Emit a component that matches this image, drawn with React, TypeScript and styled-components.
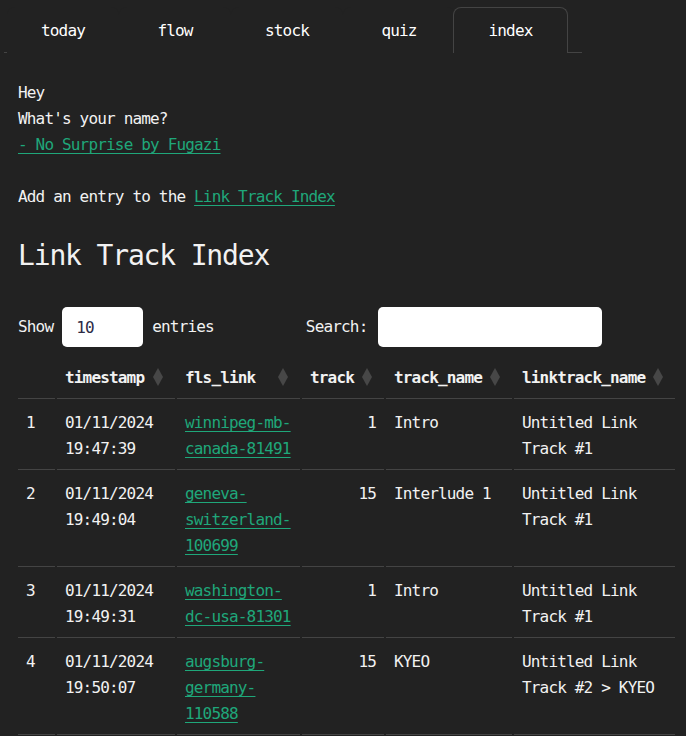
import React from 'react';
import styled, {createGlobalStyle} from 'styled-components';

const mono = `'DejaVu Sans Mono', 'Liberation Mono', monospace`;

const GlobalStyle = createGlobalStyle`
    html, body {
        margin: 0;
        background: #222;
        color: #f2f2f2;
        font-family: ${mono};
        font-size: 16px;
        letter-spacing: -0.83px;
        line-height: 26px;
    }
`;

const Nav = styled.ul`
    display: flex;
    list-style: none;
    margin: 0 0 0 4px;
    padding: 7px 0 0 3px;
    width: 575px;
    border-bottom: 1px solid #444;
`;

interface ITabProps {
    readonly active?: boolean;
};

const Tab = styled.li<ITabProps>`
    width: 112px;
    height: 46px;
    box-sizing: border-box;
    display: flex;
    align-items: center;
    justify-content: center;
    color: #fff;
    padding-top: 1px;
    border: 1px solid ${props => props.active ? '#444' : 'transparent'};
    border-bottom: none;
    border-radius: 8px 8px 0 0;
    margin-bottom: -1px;
    background: #222;
    ${props => props.active ? 'width: 115px; margin: 0 -1px -1px -2px;' : ''}
`;

const Main = styled.main`
    padding: 27px 18px 0;
`;

const Para = styled.p`
    margin: 0 0 26px;
`;

const Link = styled.a`
    color: #1fa77a;
    text-decoration: underline;
    text-underline-offset: 3px;
`;

const Title = styled.h1`
    font-size: 28px;
    font-weight: normal;
    letter-spacing: -1.16px;
    line-height: 36px;
    margin: 28px 0 33px;
`;

const Controls = styled.div`
    display: flex;
    align-items: center;
    height: 40px;
`;

interface ILabelProps {
    readonly spacing: number;
};

const Label = styled.label<ILabelProps>`
    display: flex;
    align-items: center;
    gap: ${props => props.spacing}px;
`;

const SearchLabel = styled(Label)`
    margin-left: 92px;
`;

interface IFieldProps {
    readonly width: number;
};

const Field = styled.input<IFieldProps>`
    width: ${props => props.width}px;
    height: 40px;
    box-sizing: border-box;
    border: none;
    border-radius: 5px;
    background: #fff;
    color: #2d2a45;
    padding: 0 14px;
    font-family: ${mono};
    font-size: 16px;
    letter-spacing: -0.83px;
    outline: none;
`;

const Table = styled.table`
    table-layout: fixed;
    width: 661px;
    margin: 7px 0 0 -2px;
    border-collapse: separate;
    border-spacing: 2px 0;
`;

interface IColProps {
    readonly width: number;
};

const Col = styled.col<IColProps>`
    width: ${props => props.width}px;
`;

const Th = styled.th`
    position: relative;
    text-align: left;
    font-weight: bold;
    padding: 11px 8px 7px;
    border-bottom: 1px solid #444;
    white-space: nowrap;
`;

interface ITdProps {
    readonly right?: boolean;
};

const Td = styled.td<ITdProps>`
    vertical-align: top;
    padding: 11px 8px 7px;
    border-bottom: 1px solid #444;
    text-align: ${props => props.right ? 'right' : 'left'};
`;

const SortIcon = styled.svg`
    position: absolute;
    right: 12px;
    top: 50%;
    margin-top: -8px;
`;

const Sort = () => (
    <SortIcon width="10" height="18" viewBox="0 0 10 18">
        <polygon points="5,0 10,9 5,18 0,9" fill="#474747" />
    </SortIcon>
);

const columns = [
    {title: '', width: 37},
    {title: 'timestamp', width: 118},
    {title: 'fls_link', width: 123},
    {title: 'track', width: 82},
    {title: 'track_name', width: 126},
    {title: 'linktrack_name', width: 161},
];

const rows = [
    {id: 1, time: '01/11/2024 19:47:39', link: 'winnipeg-mb-canada-81491', track: 1, name: 'Intro', lt: 'Untitled Link Track #1'},
    {id: 2, time: '01/11/2024 19:49:04', link: 'geneva-switzerland-100699', track: 15, name: 'Interlude 1', lt: 'Untitled Link Track #1'},
    {id: 3, time: '01/11/2024 19:49:31', link: 'washington-dc-usa-81301', track: 1, name: 'Intro', lt: 'Untitled Link Track #1'},
    {id: 4, time: '01/11/2024 19:50:07', link: 'augsburg-germany-110588', track: 15, name: 'KYEO', lt: 'Untitled Link Track #2 > KYEO'},
];

const tabs = ['today', 'flow', 'stock', 'quiz', 'index'];

export default function App() {
    return (
        <>
            <GlobalStyle />
            <Nav>
                {tabs.map(t => <Tab key={t} active={t === 'index'}>{t}</Tab>)}
            </Nav>
            <Main>
                <Para>
                    Hey<br />
                    What's your name?<br />
                    <Link href="#">- No Surprise by Fugazi</Link>
                </Para>
                <Para>
                    Add an entry to the <Link href="#">Link Track Index</Link>
                </Para>

                <Title>Link Track Index</Title>

                <Controls>
                    <Label spacing={9}>
                        Show <Field width={81} defaultValue="10" /> entries
                    </Label>
                    <SearchLabel spacing={11}>
                        Search: <Field width={224} />
                    </SearchLabel>
                </Controls>

                <Table>
                    <colgroup>
                        {columns.map(c => <Col key={c.title} width={c.width} />)}
                    </colgroup>
                    <thead>
                        <tr>
                            {columns.map(c => (
                                <Th key={c.title}>{c.title}{c.title && <Sort />}</Th>
                            ))}
                        </tr>
                    </thead>
                    <tbody>
                        {rows.map(r => (
                            <tr key={r.id}>
                                <Td>{r.id}</Td>
                                <Td>{r.time}</Td>
                                <Td><Link href="#">{r.link}</Link></Td>
                                <Td right>{r.track}</Td>
                                <Td>{r.name}</Td>
                                <Td>{r.lt}</Td>
                            </tr>
                        ))}
                    </tbody>
                </Table>
            </Main>
        </>
    );
}
